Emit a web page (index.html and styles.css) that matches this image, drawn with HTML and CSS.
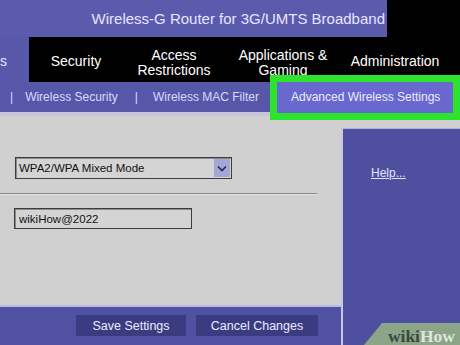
FILE: index.html
```html
<!DOCTYPE html>
<html lang="en">
<head>
    <meta charset="UTF-8">
    <title>Wireless-G Router - Wireless Security</title>
    <link rel="stylesheet" href="styles.css">
</head>
<body>
    <div class="header">
        <div class="title">Wireless-G Router for 3G/UMTS Broadband</div>
        <div class="header-fill"></div>
    </div>

    <div class="tabs">
        <div class="tab tab-current"><span>Wireless</span></div>
        <div class="tab tab-security">Security</div>
        <div class="tab tab-access">Access<br>Restrictions</div>
        <div class="tab tab-apps">Applications &amp;<br>Gaming</div>
        <div class="tab tab-admin">Administration</div>
    </div>

    <div class="subnav">
        <span class="sep">|</span>
        <a class="sub-link">Wireless Security</a>
        <span class="sep sep-2">|</span>
        <a class="sub-link sub-mac">Wireless MAC Filter</a>
        <a class="sub-link sub-current">Advanced Wireless Settings</a>
    </div>

    <div class="main">
        <div class="left-col">
            <div class="content">
                <div class="field-row">
                    <div class="select">
                        <span class="select-text">WPA2/WPA Mixed Mode</span>
                        <span class="select-arrow">
                            <svg width="10" height="7" viewBox="0 0 10 7"><path d="M1 1.5 L5 5.5 L9 1.5" fill="none" stroke="#22226a" stroke-width="1.6"/></svg>
                        </span>
                    </div>
                </div>
                <div class="divider"></div>
                <div class="field-row field-key">
                    <input class="text-input" type="text" value="wikiHow@2022">
                </div>
            </div>
            <div class="footer">
                <button class="btn btn-save">Save Settings</button>
                <button class="btn btn-cancel">Cancel Changes</button>
            </div>
        </div>
        <div class="right-col">
            <div class="help-panel">
                <a class="help-link">Help...</a>
            </div>
        </div>
    </div>

    <div class="wikihow"><span class="wiki">wiki</span><span class="how">How</span></div>
</body>
</html>
```

FILE: styles.css
```css
* {
    margin: 0;
    padding: 0;
    box-sizing: border-box;
}
body {
    width: 460px;
    height: 345px;
    overflow: hidden;
    position: relative;
    font-family: 'Liberation Sans', Arial, sans-serif;
    background: #d0d0d0;
}
.header {
    display: flex;
    height: 37px;
}
.title {
    width: 387px;
    background: #5b5bad;
    color: #e6e6ff;
    font-size: 15px;
    line-height: 37px;
    text-align: right;
    padding-right: 2px;
}
.header-fill {
    flex: 1;
    background: #000;
}
.tabs {
    display: flex;
    height: 45px;
    background: #000;
}
.tab {
    display: flex;
    align-items: center;
    justify-content: center;
    text-align: center;
    color: #fff;
    font-size: 14px;
    line-height: 15px;
    padding-top: 6px;
}
.tab-current {
    width: 29px;
    background: #5858ab;
    justify-content: flex-end;
    overflow: hidden;
    padding-right: 22px;
    padding-top: 4px;
    color: #e8e8ff;
}
.tab-security { width: 94px; padding-top: 4px; }
.tab-access { width: 102px; }
.tab-apps { width: 116px; }
.tab-admin { width: 108px; padding-top: 4px; }
.subnav {
    display: flex;
    align-items: center;
    height: 30px;
    background: #5757aa;
    color: #d8d8ff;
    font-size: 12px;
    padding-left: 10px;
}
.sep {
    margin-right: 12px;
}
.sep-2 {
    margin-left: 17px;
    margin-right: 15px;
}
.sub-link {
    color: #d8d8ff;
}
.sub-current {
    position: relative;
    z-index: 1;
    margin-left: 18px;
    width: 176px;
    height: 31px;
    line-height: 31px;
    padding-left: 14px;
    background: #6868cf;
    color: #ececff;
    outline: 7px solid #2ee32e;
    margin-top: 1px;
}
.main {
    display: flex;
    height: 233px;
    border-top: 4px solid #c6c6d6;
}
.left-col {
    width: 341px;
    display: flex;
    flex-direction: column;
}
.content {
    flex: 1;
    background: #d0d0d0;
    padding-top: 41px;
}
.field-row {
    padding-left: 15px;
}
.select {
    display: flex;
    align-items: center;
    width: 217px;
    height: 22px;
    border: 1px solid #3c3c3c;
    box-shadow: inset 1px 1px 0 #8c8c8c;
    background: #d4d4d4;
    font-size: 11.5px;
    color: #111;
}
.select-text {
    flex: 1;
    padding-left: 3px;
}
.select-arrow {
    width: 16px;
    height: 18px;
    margin-right: 1px;
    background: #a6a6d2;
    display: flex;
    align-items: center;
    justify-content: center;
}
.divider {
    width: 317px;
    margin-top: 14px;
    border-top: 1px solid #8a8a8a;
    border-bottom: 1px solid #e2e2e2;
}
.field-key {
    margin-top: 13px;
    padding-left: 14px;
}
.text-input {
    display: block;
    width: 178px;
    height: 21px;
    border: 1px solid #3c3c3c;
    box-shadow: inset 1px 1px 0 #8c8c8c;
    background: #d4d4d4;
    font-family: 'Liberation Sans', Arial, sans-serif;
    font-size: 11.5px;
    color: #111;
    padding-left: 4px;
    outline: none;
}
.footer {
    height: 40px;
    background: #5151a3;
    border-top: 2px solid #b8b8e2;
    display: flex;
    gap: 10px;
    padding: 8px 0 0 76px;
}
.btn {
    height: 21px;
    background: #3b3b82;
    border: none;
    color: #ececff;
    font-family: 'Liberation Sans', Arial, sans-serif;
    font-size: 12.5px;
}
.btn-save { width: 110px; }
.btn-cancel { width: 122px; }
.right-col {
    flex: 1;
    padding-top: 12px;
    background: #d0d0d0;
    display: flex;
}
.help-panel {
    flex: 1;
    background: #4f4f9f;
    border-left: 2px solid #c8c8e6;
    border-top: 1px solid #b4b4d8;
    padding: 34px 0 0 28px;
}
.help-link {
    color: #e4e4ff;
    font-size: 12px;
    text-decoration: underline;
}
.wikihow {
    position: absolute;
    right: 0;
    bottom: 0;
    width: 96px;
    height: 22px;
    background: #8ca487;
    clip-path: polygon(18px 0, 100% 0, 100% 100%, 0 100%);
    font-family: 'Liberation Serif', 'Times New Roman', serif;
    font-weight: bold;
    font-size: 17.5px;
    line-height: 22px;
    text-align: right;
    padding-right: 5px;
    padding-top: 2px;
}
.wiki { color: #3b4a3d; }
.how { color: #dfe6df; }
```
